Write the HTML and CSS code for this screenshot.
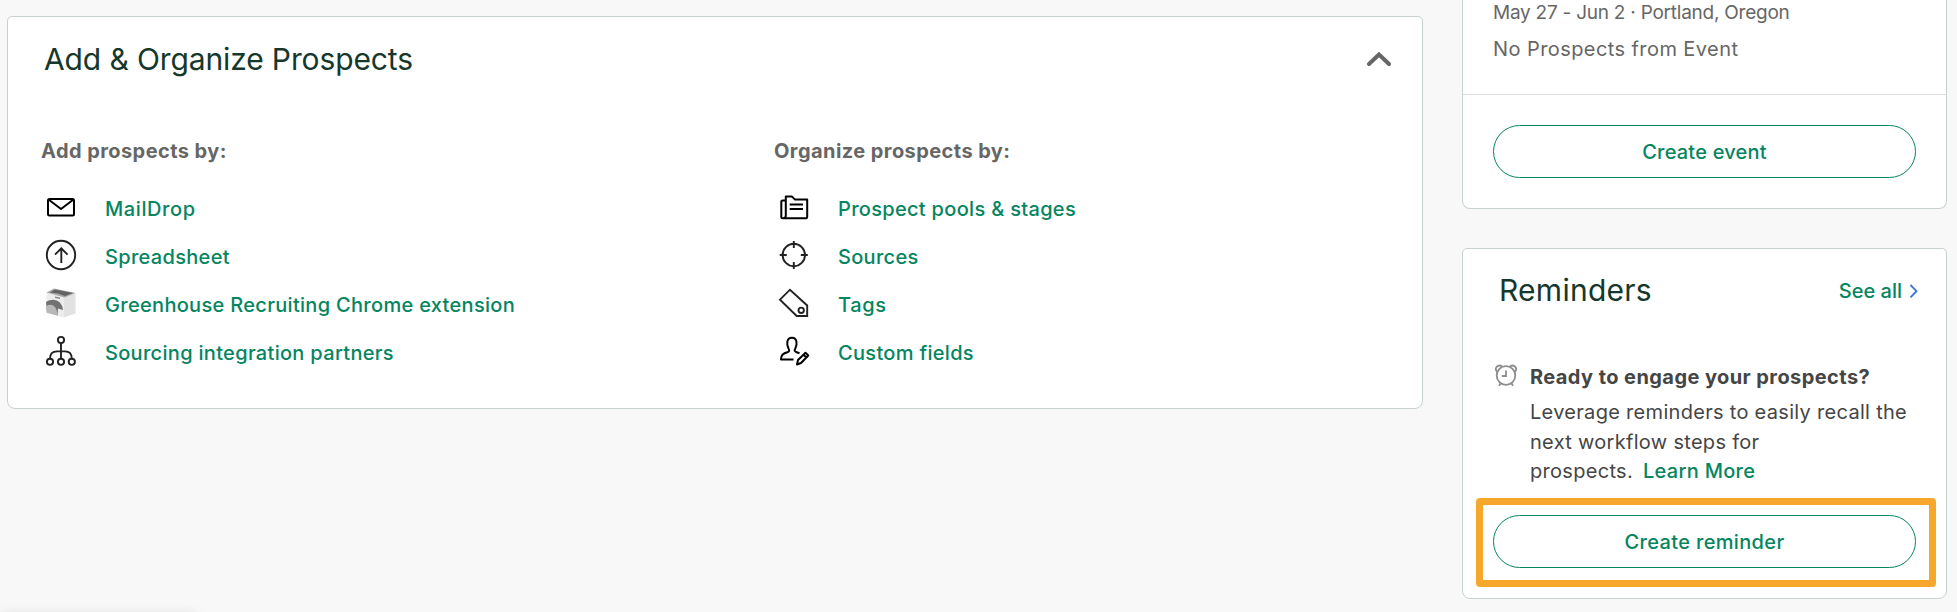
FILE: index.html
```html
<!DOCTYPE html>
<html lang="en">
<head>
    <meta charset="utf-8">
    <title>Prospects</title>
    <link rel="stylesheet" href="styles.css">
</head>
<body>
    <div class="page">
        <main class="card organize">
            <div class="card-header">
                <h2 class="organize-title">Add &amp; Organize Prospects</h2>
                <svg class="collapse" viewBox="0 0 26 16"><path d="M3 13 L13 3.5 L23 13"/></svg>
            </div>
            <div class="columns">
                <section class="column">
                    <h4>Add prospects by:</h4>
                    <ul>
                        <li>
                            <svg class="icon bold" viewBox="0 0 32 32"><rect x="3" y="8" width="26" height="16.5" rx="1.5"/><path d="M3.5 8.5 L16 18 L28.5 8.5"/></svg>
                            <a class="wide" href="#">MailDrop</a>
                        </li>
                        <li>
                            <svg class="icon" viewBox="0 0 32 32"><circle cx="16" cy="16" r="14.2"/><path d="M16.3 24 V9.5 M10 15.6 L16.3 9.3 L22.6 15.6"/></svg>
                            <a href="#">Spreadsheet</a>
                        </li>
                        <li>
                            <svg class="icon product" viewBox="0 0 32 32">
                                <path fill="#ececec" d="M1.5 5.5 L18.5 10 V30.5 L1.5 26 Z"/>
                                <path fill="#e2e2e2" d="M18.5 10 L30.5 6.5 V26.5 L18.5 30.5 Z"/>
                                <path fill="#a6a6a6" d="M1.5 5.5 L9 1.5 L30.5 6 L19.5 10.5 Z"/>
                                <path fill="#626262" d="M10 2.5 L28 6 L20 9 L13 6.5 L5 5.5 Z"/>
                                <path fill="#8a8a8a" d="M10 9.5 L15 10.5 V12 L10 11 Z"/>
                                <path fill="#727272" d="M1 15 C8 10.5 17 13 18 23 L13 21.5 L12.5 28.5 L2 25 Z"/>
                                <path fill="#b8b8b8" d="M1.5 19 C6 16 12 18 12.5 28.5 L1.5 25.5 Z"/>
                            </svg>
                            <a href="#">Greenhouse Recruiting Chrome extension</a>
                        </li>
                        <li>
                            <svg class="icon" viewBox="0 0 32 32"><circle cx="16" cy="5" r="3.1"/><circle cx="5" cy="26.8" r="3.1"/><circle cx="16" cy="26.8" r="3.1"/><circle cx="26.8" cy="26.8" r="3.1"/><path d="M16 8 V23.7 M5 23.7 C5 18.5 8 16.4 12 16.4 H20 C24 16.4 26.8 18.5 26.8 23.7"/></svg>
                            <a href="#">Sourcing integration partners</a>
                        </li>
                    </ul>
                </section>
                <section class="column">
                    <h4>Organize prospects by:</h4>
                    <ul>
                        <li>
                            <svg class="icon bold" viewBox="0 0 32 32"><path d="M7.8 9.5 H4.5 Q3.3 9.5 3.3 10.7 V25.8 Q3.3 27.3 4.8 27.3 H27.3 Q29.2 27.3 29.2 25.4 V8.6 H17 L14 5.6 H7.8 V24.5 Q7.8 27 5.5 27.2"/><path d="M11.7 13.5 H25 M11.7 18 H25"/></svg>
                            <a href="#">Prospect pools &amp; stages</a>
                        </li>
                        <li>
                            <svg class="icon" viewBox="0 0 32 32"><circle cx="15.8" cy="16" r="11.2"/><path d="M15.8 2 V9 M15.8 23 V30 M1.8 16 H8.8 M22.8 16 H29.8"/></svg>
                            <a href="#">Sources</a>
                        </li>
                        <li>
                            <svg class="icon" viewBox="0 0 32 32"><path d="M2 12.7 L12 2.7 L29.2 18.5 V29 H18.7 Z"/><circle cx="23.2" cy="23.3" r="2.7"/></svg>
                            <a class="wide" href="#">Tags</a>
                        </li>
                        <li>
                            <svg class="icon bold" viewBox="0 0 32 32"><path d="M15.5 24.6 H3 C3 19.5 5 18.5 10 17 C11.5 16 11.5 15 10.5 13.5 C8.5 9.5 8.2 2.8 14 2.8 C19.5 2.8 19.3 9.5 17.3 13.5 C16.3 15 16.3 16 18 17 L21.5 18.2"/><path d="M19 29.5 L20 25 L27.5 17.8 L30.3 20.5 L23 28 Z M25.5 19.8 L28.3 22.5"/></svg>
                            <a href="#">Custom fields</a>
                        </li>
                    </ul>
                </section>
            </div>
        </main>

        <aside class="sidebar">
            <section class="card events">
                <div class="event">
                    <p class="event-date">May 27 - Jun 2 · Portland, Oregon</p>
                    <p class="event-count">No Prospects from Event</p>
                </div>
                <button class="button">Create event</button>
            </section>

            <section class="card reminders">
                <div class="reminders-header">
                    <h2>Reminders</h2>
                    <a class="see-all" href="#">See all <svg viewBox="0 0 10 16"><path d="M1.5 2 L7.5 8.2 L1.5 14.4"/></svg></a>
                </div>
                <div class="reminder">
                    <svg class="clock" viewBox="0 0 24 24"><circle cx="12" cy="12.5" r="9.3"/><path d="M12 7.5 V13 H7.8 M6.5 20.5 L5 22.8 M17.5 20.5 L19 22.8"/><path d="M3 8.5 C0 5.5 3.5 0.8 8 3.2 M21 8.5 C24 5.5 20.5 0.8 16 3.2"/></svg>
                    <div class="reminder-text">
                        <strong>Ready to engage your prospects?</strong>
                        <p>Leverage reminders to easily recall the<br>next workflow steps for<br>prospects. <a class="learn-more" href="#">Learn More</a></p>
                    </div>
                </div>
                <div class="highlight">
                    <button class="button">Create reminder</button>
                </div>
            </section>
        </aside>
    </div>
    <div class="status-shadow"></div>
</body>
</html>
```

FILE: styles.css
```css
* {
    box-sizing: border-box;
}

body {
    margin: 0;
    height: 612px;
    overflow: hidden;
    background-color: #f8f8f8;
    font-family: Inter, "Liberation Sans", sans-serif;
    font-size: 20px;
    color: #454545;
}

h2, h4, p, ul {
    margin: 0;
    padding: 0;
    font-weight: 400;
}

a {
    color: #058560;
    font-weight: 500;
    text-decoration: none;
}

svg {
    display: block;
    fill: none;
    flex: none;
}

.page {
    display: flex;
    align-items: flex-start;
    gap: 39px;
    padding-left: 7px;
}

.card {
    background-color: #fff;
    border: 1px solid #c7d2ce;
    border-radius: 5px 5px 8px 8px;
}

h2 {
    font-size: 30px;
    line-height: 36px;
    letter-spacing: 0.25px;
    color: #15372c;
}

/* Add & organize */
.organize {
    width: 1416px;
    height: 393px;
    margin-top: 16px;
    padding: 24px 30px 0 33px;
}
.organize-title {
    letter-spacing: -0.12px;
}
.card-header {
    display: flex;
    justify-content: space-between;
    align-items: center;
    padding-left: 3px;
}
.collapse {
    width: 26px;
    height: 16px;
    stroke: #666;
    stroke-width: 4;
    stroke-linecap: round;
}
.columns {
    display: flex;
    padding-top: 62px;
}
.column {
    width: 733px;
    flex: none;
}
.column:last-child {
    width: 600px;
}
h4 {
    font-size: 20px;
    line-height: 24px;
    font-weight: 700;
    letter-spacing: 0.43px;
    color: #666;
    margin-bottom: 21px;
}
li {
    display: flex;
    align-items: center;
    gap: 28px;
    height: 48px;
    padding-left: 4px;
}
li a {
    padding-top: 2px;
    letter-spacing: 0.31px;
}
li .wide {
    letter-spacing: 0.6px;
}
.icon {
    width: 32px;
    height: 32px;
    margin-bottom: 2px;
    stroke: #222;
    stroke-width: 1.9;
}
.bold {
    stroke: #000;
    stroke-width: 2;
    stroke-linejoin: round;
}
.product {
    stroke: none;
}

/* Sidebar */
.sidebar {
    display: flex;
    flex-direction: column;
    gap: 39px;
    width: 485px;
}
.events {
    height: 209px;
    border-top: 0;
    border-top-left-radius: 0;
    border-top-right-radius: 0;
}
.event {
    height: 95px;
    padding-left: 30px;
    border-bottom: 1px solid #ddd;
    color: #666;
}
.event p {
    height: 37px;
    line-height: 24px;
}
.event .event-date {
    font-size: 19px;
    line-height: 25px;
    letter-spacing: -0.24px;
}
.event-count {
    letter-spacing: 0.42px;
}
.button {
    display: block;
    width: 423px;
    height: 53px;
    padding: 0;
    border: 1px solid #058560;
    border-radius: 27px;
    background-color: #fff;
    color: #058560;
    font: 500 20px Inter, "Liberation Sans", sans-serif;
    letter-spacing: 0.35px;
}
.events .button {
    margin: 30px 0 0 30px;
    letter-spacing: 0.2px;
}
.reminders {
    height: 351px;
    padding: 23px 10px 0 13px;
}
.reminders-header {
    display: flex;
    justify-content: space-between;
    align-items: center;
    padding: 0 17px 0 23px;
}
.see-all {
    display: flex;
    align-items: center;
    gap: 7px;
    padding-top: 1px;
}
.see-all svg {
    width: 10px;
    height: 16px;
    stroke: #3a72d8;
    stroke-width: 1.8;
}
.reminder {
    display: flex;
    gap: 12px;
    padding: 55px 0 12px 18px;
}
.clock {
    width: 24px;
    height: 24px;
    stroke: #8c8c8c;
    stroke-width: 1.8;
}
.reminder-text strong {
    display: block;
    line-height: 28px;
    letter-spacing: 0.42px;
}
.reminder-text p {
    height: 88px;
    margin-top: 7px;
    line-height: 29.5px;
    letter-spacing: 0.3px;
    white-space: nowrap;
}
.learn-more {
    margin-left: 4px;
}
.highlight {
    width: 460px;
    height: 89px;
    border: 7px solid #f8a72d;
    border-radius: 4px;
    padding: 10px;
}

/* Soft edge of the status bar below the window */
.status-shadow {
    position: absolute;
    left: 0;
    top: 614px;
    width: 196px;
    height: 20px;
    box-shadow: 0 0 12px rgba(0, 0, 0, 0.12);
}
```
